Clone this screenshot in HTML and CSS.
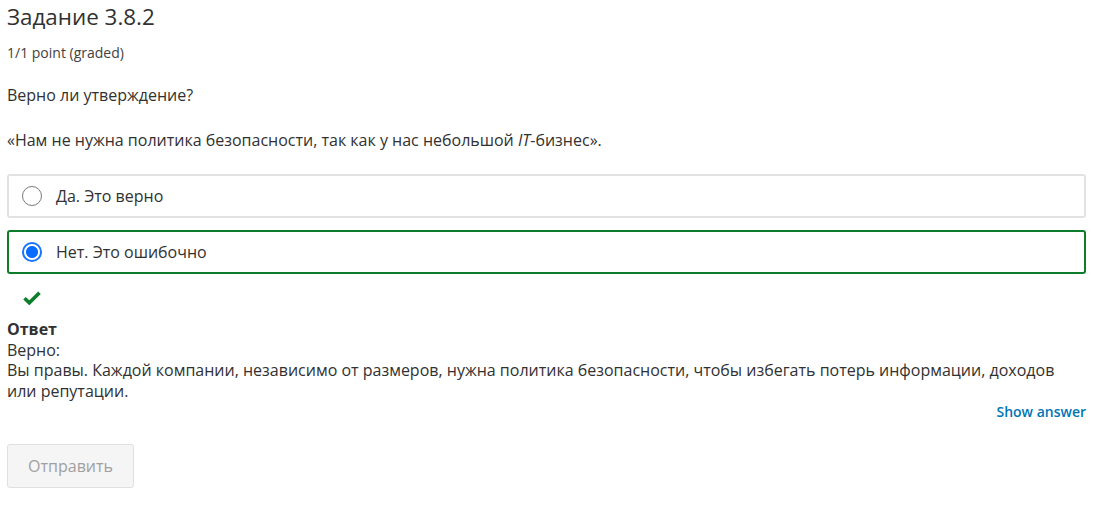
FILE: index.html
```html
<!DOCTYPE html>
<html lang="ru">
<head>
<meta charset="utf-8">
<link rel="stylesheet" href="styles.css">
</head>
<body>
<div class="problem">
  <h3 class="title">Задание 3.8.2</h3>
  <div class="points">1/1 point (graded)</div>
  <p class="q">Верно ли утверждение?</p>
  <p class="q q2">«Нам не нужна политика безопасности, так как у нас небольшой <em>IT</em>-бизнес».</p>
  <div class="choices">
    <label class="choice">
      <span class="radio"></span>
      <span class="label">Да. Это верно</span>
    </label>
    <label class="choice correct">
      <span class="radio checked"></span>
      <span class="label">Нет. Это ошибочно</span>
    </label>
  </div>
  <div class="status">
    <svg width="18" height="14" viewBox="0 0 18 14"><path d="M1.5 7.2 L6.3 11.8 L16.5 1.8" fill="none" stroke="#0d7d2c" stroke-width="3.6" stroke-linejoin="miter"/></svg>
  </div>
  <div class="solution">
    <div class="sol-head">Ответ</div>
    <div>Верно:</div>
    <div>Вы правы. Каждой компании, независимо от размеров, нужна политика безопасности, чтобы избегать потерь информации, доходов или репутации.</div>
  </div>
  <div class="actions-right"><a class="show">Show answer</a></div>
  <div class="actions"><button class="submit" disabled>Отправить</button></div>
</div>
</body>
</html>
```
FILE: styles.css
```css
html, body { margin: 0; padding: 0; background: #fff; }
body { font-family: "Open Sans", "Noto Sans", sans-serif; color: #313131; }
.problem { padding: 0 14px 0 7px; }
.title { margin: 0; padding-top: 3px; font-size: 22.4px; font-weight: 400; line-height: 28px; color: #313131; }
.points { margin-top: 12px; font-size: 14px; line-height: 20px; color: #414141; }
.q { margin: 0; font-size: 16px; line-height: 22px; margin-top: 21px; }
.q2 { margin-top: 23px; }
.choices { margin-top: 23px; display: flex; flex-direction: column; gap: 12px; }
.choice { display: flex; align-items: center; height: 44px; box-sizing: border-box; border: 2px solid #e2e2e2; border-radius: 3px; padding-left: 13px; font-size: 16px; }
.choice.correct { border-color: #0d7d2c; }
.radio { width: 20px; height: 20px; box-sizing: border-box; border: 1.5px solid #7a7a7a; border-radius: 50%; background: #fff; margin-right: 14px; flex: none; }
.radio.checked { border: 2px solid #1a74ff; background: radial-gradient(circle, #0a6cff 0 5.6px, #fff 6.4px); }
.status { height: 20px; margin-top: 17px; padding-left: 16px; }
.status svg { display: block; }
.solution { margin-top: 8px; font-size: 16px; line-height: 20.5px; }
.sol-head { font-weight: 700; }
.actions-right { display: flex; justify-content: flex-end; margin-top: 0; }
.show { color: #0075b4; font-size: 14px; font-weight: 600; line-height: 22px; cursor: pointer; }
.actions { margin-top: 21px; }
.submit { font-family: inherit; font-size: 16px; color: #a0a0a0; background: #f5f5f5; border: 1px solid #e0e0e0; border-radius: 3px; width: 127px; height: 44px; padding: 0; }
```
